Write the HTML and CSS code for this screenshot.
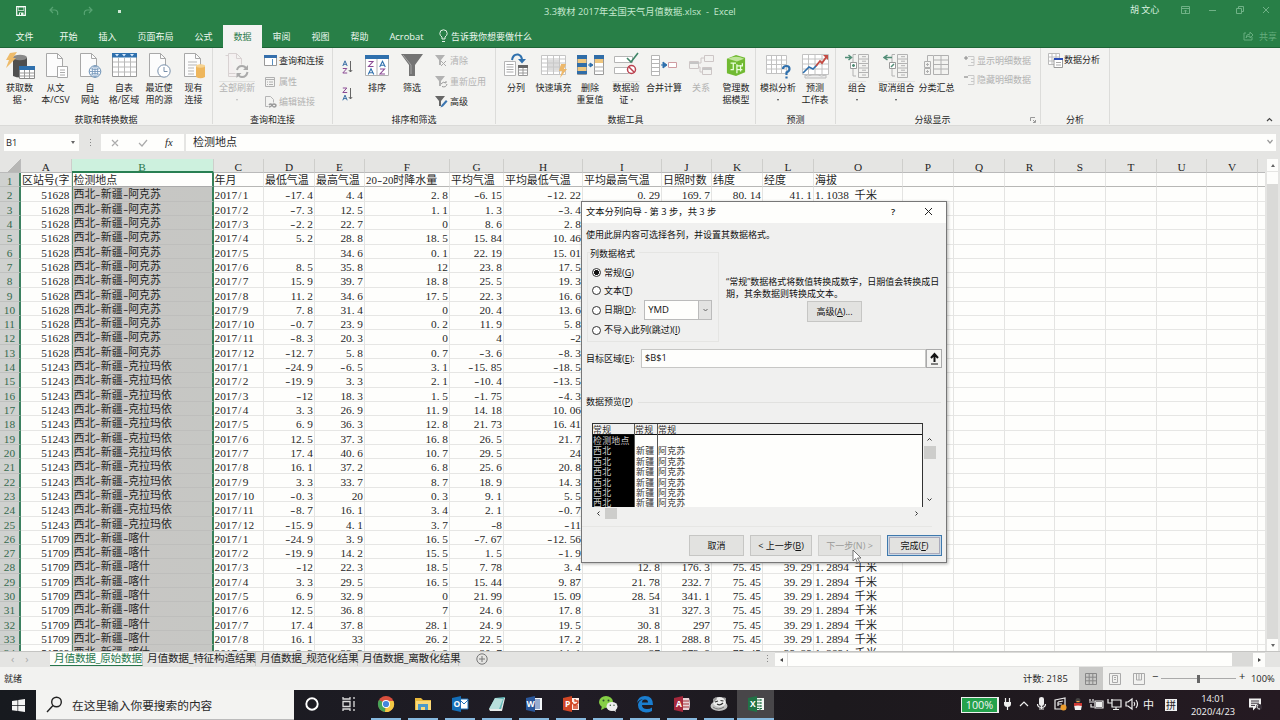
FILE: index.html
```html
<!DOCTYPE html>
<html lang="zh-CN">
<head>
<meta charset="utf-8">
<title>3.3教材 2017年全国天气月值数据.xlsx - Excel</title>
<link rel="stylesheet" href="styles.css">
</head>
<body>
<svg width="0" height="0" class="defs">
  <defs>
    <symbol id="page" viewBox="0 0 24 27"><path d="M2.500 1.500h11l5 5v18h-16z" fill="#fcfcfc" stroke="#a8a8a8"/><path d="M13.500 1.500v5h5" fill="none" stroke="#a8a8a8"/></symbol>
    <symbol id="funnel" viewBox="0 0 24 27"><path d="M1 2h22l-8 11v11h-6v-11z" fill="#747474"/><path d="M3 3l8 10v9" fill="none" stroke="#a5a5a5"/></symbol>
    <symbol id="outline" viewBox="0 0 27 27"><path d="M14.500 2.500h10v23h-10zM14.500 7h10M14.500 11.500h10M14.500 16h10M14.500 20.500h10M18 4.700h4M18 9.200h4M18 13.700h4M18 18.200h4M18 23h4M12 2.500h-3v8M12 24h-3v-8" fill="none" stroke="#b2b2b2"/><path d="M6.500 10.500h6v6h-6z" fill="#fff" stroke="#999"/></symbol>
  </defs>
</svg>
<div class="app">
  <header class="titlebar">
    <div class="quick">
      <svg width="10" height="10" viewBox="0 0 10 10"><path d="M.7.700h8.600v8.600H.7z" fill="none" stroke="#fff" stroke-width="1.200"/><path d="M2 .7h6v4H2zM3 6.500h4.500v3H3z" fill="#e9f6ec"/><path d="M2.500 1.500h5v2.500h-5zM4 7h1v2H4z" fill="#287f47"/></svg>
      <svg width="11" height="11" viewBox="0 0 11 11"><path d="M4 1L1 4l3 3M1 4h5q3.500.5 2.500 5" fill="none" stroke="#57a473" stroke-width="1.200"/></svg>
      <svg width="11" height="11" viewBox="0 0 11 11"><path d="M7 1l3 3-3 3M10 4H5Q1.500 4.500 2.500 9" fill="none" stroke="#57a473" stroke-width="1.200"/></svg>
      <i class="qdot"></i>
    </div>
    <div class="doc">3.3教材 2017年全国天气月值数据.xlsx&nbsp; -&nbsp; Excel</div>
    <div class="user">胡 文心</div>
    <svg class="winbtns" width="92" height="12" viewBox="0 0 92 12"><g fill="none" stroke="#70b287"><path d="M.5 2.500h8v7h-8zM.5 4.500h8M4.500 9V6M3 7.500L4.500 6 6 7.500M28 6.500h7M55.500 4.500h5v5h-5zM57.500 4.500v-2h5v5h-2"/><path d="M82 3l6 6M88 3l-6 6"/></g></svg>
  </header>
  <nav class="tabs">
    <span style="width:49px">文件</span><span style="width:39px">开始</span><span style="width:39px">插入</span><span style="width:57px">页面布局</span><span style="width:39px">公式</span><span class="on" style="width:39px">数据</span><span style="width:39px">审阅</span><span style="width:39px">视图</span><span style="width:39px">帮助</span><span class="acro" style="width:55px">Acrobat</span>
    <svg class="bulb" width="9" height="14" viewBox="0 0 9 14"><path d="M3 10V8Q.8 6.500.800 4.500a3.700 3.700 0 017.400 0Q8.200 6.500 6 8v2zM3 12.500h3" fill="none" stroke="#e2f2e6"/></svg>
    <span class="tell">告诉我你想要做什么</span>
    <svg class="share" width="11" height="10" viewBox="0 0 11 10"><path d="M3 2H1v7h8V6M3 7q0-4 4-4V1l3 3-3 3V5q-3 0-4 2" fill="none" stroke="#65ad7e"/></svg><span class="sharetxt">共享</span>
  </nav>

  <section class="ribbon">
    <div class="group" style="width:213px">
      <div class="tools">
        <div class="btn" style="width:39px"><svg width="30" height="27" viewBox="0 0 30 27"><path d="M8 6q6-4 14 0v18q-7 3-14 0z" fill="#4f4f4f"/><ellipse cx="15" cy="5.500" rx="7" ry="2.800" fill="#8a8a8a"/><path d="M5 1l7-1-4 6 3 0L1 16l3-8H1z" fill="#eebb6a"/><path d="M14.500 15.500h15v11h-15z" fill="#fff" stroke="#888"/><path d="M14 14h16v4H14z" fill="#2f70ad"/><path d="M15 21h14M15 24h14M19.500 18v8M24.500 18v8" stroke="#999"/></svg><p>获取数<br>据 <b class="dd"></b></p></div>
        <div class="btn" style="width:33px"><svg width="24" height="27" viewBox="0 0 24 27"><use href="#page"/><path d="M13.500 14.500h10v11h-10z" fill="#fff" stroke="#a8a8a8"/><path d="M16 18h5M16 20.500h5M16 23h5" stroke="#aaa"/></svg><p>从文<br>本/CSV</p></div>
        <div class="btn" style="width:36px"><svg width="24" height="27" viewBox="0 0 24 27"><use href="#page"/><circle cx="17" cy="19.500" r="5.800" fill="#f8fbff" stroke="#6c91b5"/><path d="M11.500 19.500h11M17 14v11M12.500 16.700q4.500 2 9 0M12.500 22.300q4.500-2 9 0" fill="none" stroke="#6c91b5" stroke-width=".8"/><ellipse cx="17" cy="19.500" rx="2.700" ry="5.700" fill="none" stroke="#6c91b5" stroke-width=".8"/></svg><p>自<br>网站</p></div>
        <div class="btn" style="width:32px"><svg width="25" height="27" viewBox="0 0 25 27"><path d="M.5 1.500h24v23H.5z" fill="#fff" stroke="#999"/><path d="M0 1h25v4.500H0z" fill="#2f70ad"/><path d="M3 2h4L5 4.500zM10 2h4L12 4.500zM18 2h4l-2 2.500z" fill="#d7eaff"/><path d="M1 10h23M1 15h23M1 20h23M6.500 6v18M12.500 6v18M18.500 6v18" stroke="#b9b9b9"/></svg><p>自表<br>格/区域</p></div>
        <div class="btn" style="width:38px"><svg width="24" height="27" viewBox="0 0 24 27"><use href="#page"/><circle cx="17" cy="19" r="6.200" fill="#fff" stroke="#7890ab"/><path d="M17 15v4.500h3.500" fill="none" stroke="#7890ab"/></svg><p>最近使<br>用的源</p></div>
        <div class="btn" style="width:31px"><svg width="24" height="27" viewBox="0 0 24 27"><use href="#page"/><path d="M6 10h9M6 13h9M6 16h6M6 19h6M6 22h6" stroke="#b5b5b5"/><path d="M14 14q4.500-3 9 0v11q-4.500 2.500-9 0z" fill="#eeb65c"/><ellipse cx="18.500" cy="14" rx="4.500" ry="1.700" fill="#f6d391"/></svg><p>现有<br>连接</p></div>
      </div>
      <div class="gname">获取和转换数据</div>
    </div>
    <div class="group" style="width:120px">
      <div class="tools">
        <div class="btn dim split" style="width:48px"><svg width="26" height="27" viewBox="0 0 26 27"><path d="M1.500 3.500h3v21h9M4.500 1.500h8l5 5v6M4.500 1.500v20h7M12.500 1.500v5h5" fill="#f4f0f0" stroke="#d8d2d2"/><path d="M13 18q1-4 5-4 3 0 4 2.500M23.500 20q-1 5-5.500 5-3 0-4-3" fill="none" stroke="#aaa" stroke-width="2"/><path d="M24 13v5h-5zM12.500 26v-5h5z" fill="#aaa"/></svg><p>全部刷新<br><b class="dd"></b></p></div>
        <div class="list" style="width:72px">
          <div class="row"><svg width="13" height="12" viewBox="0 0 13 12"><path d="M.5 1.500h12v9H.5z" fill="#fff" stroke="#999"/><path d="M0 0h13v3H0z" fill="#356fac"/><path d="M8.500 4v6" stroke="#5a8fc0"/></svg>查询和连接</div>
          <div class="row dim"><svg width="13" height="12" viewBox="0 0 13 12"><path d="M1.500 1.500h9v9h-9zM1.500 3.500h9M3 6h1M5 6h4M3 8.500h1M5 8.500h4" fill="none" stroke="#b0b0b0"/></svg>属性</div>
          <div class="row dim"><svg width="13" height="12" viewBox="0 0 13 12"><path d="M1.500.500h5l3 3v3M1.500.500v10h3" fill="none" stroke="#b5b5b5"/><path d="M5 9q1.500-2 3 0M8 9q2-2 4 0 0 2-2 2-1 0-2-2-1 2-3 2" fill="none" stroke="#999" stroke-width="1.400"/></svg>编辑链接</div>
        </div>
      </div>
      <div class="gname">查询和连接</div>
    </div>
    <div class="group" style="width:163px">
      <div class="tools">
        <div class="sorts">
          <svg width="12" height="14" viewBox="0 0 12 14"><path d="M.8 6L3 .8 5.200 6M1.600 4.300h2.800" fill="none" stroke="#3a6ea5"/><path d="M.8 8.500h4L.8 13h4.400" fill="none" stroke="#8a4a94"/><path d="M8.500 1v11M6.800 10l1.700 2 1.700-2" fill="none" stroke="#666"/></svg>
          <svg width="12" height="14" viewBox="0 0 12 14"><path d="M.8 1h4L.8 5.500h4.400" fill="none" stroke="#8a4a94"/><path d="M.8 13.300L3 8.100l2.200 5.200M1.600 11.600h2.800" fill="none" stroke="#3a6ea5"/><path d="M8.500 1v11M6.800 10l1.700 2 1.700-2" fill="none" stroke="#666"/></svg>
        </div>
        <div class="btn" style="width:34px"><svg width="24" height="27" viewBox="0 0 24 27"><path d="M.5 3.500h23v20H.5zM12 3.500v20" fill="#fff" stroke="#b0b0b0"/><path d="M0 3h24v4H0z" fill="#2f70ad"/><path d="M3.500 9.500h4.500l-4.500 5h5M15 17h4.500l-4.500 5h5" fill="none" stroke="#8a4a94" stroke-width="1.100"/><path d="M3.200 22.500L6 16.800l2.800 5.700M4.300 20.700h3.400M14.700 15l2.800-5.700L20.300 15M15.800 13.200h3.400" fill="none" stroke="#2f70ad" stroke-width="1.100"/></svg><p>排序</p></div>
        <div class="btn" style="width:36px"><svg width="24" height="27"><use href="#funnel"/></svg><p>筛选</p></div>
        <div class="list" style="width:65px;padding-left:5px">
          <div class="row dim"><svg width="13" height="12" viewBox="0 0 13 12"><path d="M0 0h10L6 5v5H4V5z" fill="#b2b2b2"/><path d="M6 6l5 5M11 6l-5 5" stroke="#aaa"/></svg>清除</div>
          <div class="row dim"><svg width="13" height="12" viewBox="0 0 13 12"><path d="M0 0h10L6 5v5H4V5z" fill="#b2b2b2"/><path d="M6 8q2-3 5-1v-2M12 8q-1 4-5 2.500" fill="none" stroke="#999"/></svg>重新应用</div>
          <div class="row"><svg width="13" height="12" viewBox="0 0 13 12"><path d="M0 0h10L6 5v5H4V5z" fill="#666"/><path d="M5.500 11.500l1-2.500 4.500-5 1.500 1.500-4.500 5z" fill="#3b75b0"/></svg>高级</div>
        </div>
      </div>
      <div class="gname">排序和筛选</div>
    </div>
    <div class="group" style="width:260px">
      <div class="tools">
        <div class="btn" style="width:40px"><svg width="24" height="27" viewBox="0 0 24 27"><path d="M.5 9.500h11v14H.5z" fill="#fff" stroke="#b5b5b5"/><path d="M2.500 12.500h7M2.500 15h7M2.500 17.500h7M2.500 20h7" stroke="#aaa"/><path d="M14.500 14.500h9v9h-9zM14.500 18h9M14.500 21h9M19 15v8" fill="#fff" stroke="#999"/><path d="M14 13h10v3H14z" fill="#666"/><path d="M8 8Q9 2 14 2.500q4 1 4 6" fill="none" stroke="#2f70ad" stroke-width="2"/><path d="M14 7h8l-4 4.500z" fill="#2f70ad"/></svg><p>分列</p></div>
        <div class="btn" style="width:35px"><svg width="26" height="27" viewBox="0 0 26 27"><path d="M.5 3.500h24v19H.5zM.5 7h24M.5 11h24M.5 15h24M.5 19h24M6.500 3v20M12.500 3v20M18.500 3v20" fill="#fff" stroke="#c5c5c5"/><path d="M7 8h11v10H7z" fill="#c9c9c9" opacity=".65"/><path d="M20 12h5l-2 5h3l-7 9 2-7h-3z" fill="#edb86b"/></svg><p>快速填充</p></div>
        <div class="btn" style="width:38px"><svg width="27" height="27" viewBox="0 0 27 27"><path d="M.5 3.500h9v19h-9zM17.500 3.500h9v19h-9z" fill="#fff" stroke="#999"/><path d="M0 3h10v4H0zM0 11h10v4H0zM0 19h10v3H0zM17 3h10v4H17z" fill="#306da8"/><path d="M1 7h8v4H1zM1 15h8v4H1zM18 7h8v4h-8z" fill="#f0c77e"/><path d="M17 15h10M17 19h10" stroke="#aaa"/><path d="M11 13h4M13 11l3 2-3 2z" stroke="#2f70ad" fill="#2f70ad"/></svg><p>删除<br>重复值</p></div>
        <div class="btn split" style="width:34px"><svg width="25" height="27" viewBox="0 0 25 27"><path d="M.5 4.500h18v6H.5zM.5 15.500h14v6H.5z" fill="#fff" stroke="#b5b5b5"/><path d="M13 6l4 4L24 1" fill="none" stroke="#3f8567" stroke-width="1.600"/><circle cx="17.500" cy="17.500" r="4" fill="#fff" stroke="#bb4250" stroke-width="1.500"/><path d="M14.500 14.500l6 6" stroke="#bb4250" stroke-width="1.500"/></svg><p>数据验<br>证 <b class="dd"></b></p></div>
        <div class="btn" style="width:42px"><svg width="26" height="27" viewBox="0 0 26 27"><path d="M.5 3.500h8v20h-8zM.5 7.500h8M.5 11.500h8M.5 15.500h8M.5 19.500h8" fill="#fff" stroke="#b5b5b5"/><path d="M17.500 10.500h8v5h-8z" fill="#fff" stroke="#cf9ca2"/><path d="M10 13h5M12 10l4 3-4 3z" stroke="#2f70ad" fill="#2f70ad"/></svg><p>合并计算</p></div>
        <div class="btn dim" style="width:32px"><svg width="25" height="27" viewBox="0 0 25 27"><path d="M.5 9.500h9v7h-9zM15.500 3.500h9v6h-9zM13.500 15.500h9v7h-9zM9 11h3V6h3M9 15h2v5h2" fill="none" stroke="#cdc6c6"/><path d="M1 10h9v2H1zM14 16h9v2h-9z" fill="#c5c5c5"/></svg><p>关系</p></div>
        <div class="btn" style="width:38px"><svg width="20" height="27" viewBox="0 0 22 27"><path d="M1 6l10-4 10 3v16l-10 4-10-3z" fill="#71ba32"/><path d="M2 6q9-4 18 0l-8 3z" fill="#bfe59a"/><path d="M5 11h6M8 11v7H5M12 12v10M12 14h6v-3M12 18h6M16 13v7" fill="none" stroke="#eaffdc" stroke-width="1.400"/></svg><p>管理数<br>据模型</p></div>
      </div>
      <div class="gname">数据工具</div>
    </div>
    <div class="group" style="width:80px">
      <div class="tools">
        <div class="btn" style="width:44px"><svg width="25" height="27" viewBox="0 0 25 27"><path d="M.5 3.500h20v18H.5zM.5 8h20M.5 12.500h20M.5 17h20M5.500 3v19M10.500 3v19M15.500 3v19" fill="#fff" stroke="#c2c2c2"/><path d="M17 17q0-3 3.500-3 3 0 3 3 0 2-3 3.500v2.500M20.500 24.500v2" fill="none" stroke="#2f70ad" stroke-width="2.200"/></svg><p>模拟分析<br><b class="dd"></b></p></div>
        <div class="btn" style="width:30px"><svg width="27" height="27" viewBox="0 0 27 27"><path d="M.5 2.500h26v20H.5zM.5 7h26M.5 12h26M.5 17h26M6.500 2v20M13 2v20M20 2v20" fill="#fff" stroke="#c2c2c2"/><path d="M1 21l6-6 4 2 4-4" fill="none" stroke="#2f70ad" stroke-width="1.600"/><path d="M14 14l4-5 2 2 5-7" fill="none" stroke="#c44b43" stroke-width="1.800"/><path d="M21 3h5v5z" fill="#c44b43"/><path d="M3 23q2 2 7 0h6q3 2 8 0v3H3z" fill="#eee" stroke="#bbb"/></svg><p>预测<br>工作表</p></div>
      </div>
      <div class="gname">预测</div>
    </div>
    <div class="group" style="width:205px">
      <div class="tools">
        <div class="btn split" style="width:42px"><svg width="27" height="27" viewBox="0 0 27 27"><use href="#outline"/><path d="M1 5.500h6M4.500 3l3 2.500-3 2.500M8 13.500h3M9.500 12v3" fill="none" stroke="#528d77" stroke-width="1.500"/></svg><p>组合<br><b class="dd"></b></p></div>
        <div class="btn split" style="width:37px"><svg width="27" height="27" viewBox="0 0 27 27"><use href="#outline"/><path d="M2 5.500h7M4.500 3L1 5.500 4.500 8M8 15l3-3" fill="none" stroke="#528d77" stroke-width="1.500"/></svg><p>取消组合<br><b class="dd"></b></p></div>
        <div class="btn" style="width:43px"><svg width="26" height="27" viewBox="0 0 26 27"><path d="M9.500 3.500h15v19h-15zM9.500 8h15M9.500 12.500h15M9.500 17h15M17 3v20M9 3.500H3.500v6M.5 9.500h6v6h-6zM.5 16.500h6v6h-6zM2 12.500h3M3.500 11v3M2 19.500h3M3.500 18v3" fill="none" stroke="#b0b0b0"/></svg><p>分类汇总</p></div>
        <div class="list details" style="width:76px">
          <div class="row dim"><svg width="13" height="12" viewBox="0 0 13 12"><path d="M1 3h4M3 1v4" stroke="#888"/><path d="M5 1.500h6v9H5M8 4.500h3M8 7.500h3" fill="none" stroke="#c9c9c9"/></svg>显示明细数据</div>
          <div class="row dim"><svg width="13" height="12" viewBox="0 0 13 12"><path d="M1 3h4" stroke="#777"/><path d="M5 1.500h6v9H5M8 4.500h3M8 7.500h3" fill="none" stroke="#c9c9c9"/></svg>隐藏明细数据</div>
        </div>
      </div>
      <div class="gname launch">分级显示<svg width="6" height="6" viewBox="0 0 6 6"><path d="M.5 4V.500H5M3 3l2 2M5.500 3v2.500H3" fill="none" stroke="#999"/></svg></div>
    </div>
    <div class="group" style="width:69px">
      <div class="tools"><div class="analysis"><svg width="15" height="15" viewBox="0 0 15 15"><path d="M.5.500h11v11H.5zM.5 4h11M.5 8h11M4 .5v11M8 .5v11" fill="#fff" stroke="#bbb"/><path d="M6 5.500h8.500v9H6z" fill="#fff" stroke="#999"/><path d="M6 5h9v2H6z" fill="#294bb6"/><path d="M8 9.500h5M8 12h5" stroke="#aaa"/></svg>数据分析</div></div>
      <div class="gname">分析</div>
    </div>
    <svg class="collapse" width="7" height="5" viewBox="0 0 7 5"><path d="M1 4l2.500-2.500L6 4" fill="none" stroke="#444" stroke-width="1.200"/></svg>
  </section>

  <section class="formula">
    <div class="namebox">B1<b class="tri"></b></div>
    <div class="grip"><i></i><i></i><i></i></div>
    <div class="fx"><svg width="50" height="12" viewBox="0 0 50 12"><path d="M5 3l6 6M11 3l-6 6M32 6l3 3 5-6" fill="none" stroke="#aaa" stroke-width="1.200"/></svg><em>fx</em></div>
    <div class="fvalue">检测地点<svg width="8" height="6" viewBox="0 0 8 6"><path d="M1.500 1L4 4l2.500-3" fill="none" stroke="#999" stroke-width="1.200"/></svg></div>
  </section>

  <main class="sheetwrap">
    <div class="sheet" id="sheet"></div>
    <div class="vscroll"><i class="arrow up"></i><i class="thumb"></i><i class="space"></i><i class="arrow down"></i></div>
  </main>

  <footer class="sheettabs">
    <div class="nav"><i>‹</i><i>›</i></div>
    <span class="tab cur" style="width:93px">月值数据_原始数据</span><span class="tab" style="width:113px">月值数据_特征构造结果</span><span class="tab" style="width:102px">月值数据_规范化结果</span><span class="tab" style="width:101px">月值数据_离散化结果</span>
    <svg class="plus" width="12" height="12" viewBox="0 0 12 12"><circle cx="6" cy="6" r="5.200" fill="none" stroke="#777"/><path d="M6 3v6M3 6h6" stroke="#777"/></svg>
    <div class="grip tabgrip"><i></i><i></i><i></i></div>
    <div class="hscroll"><i class="ha l"></i><i class="hthumb"></i><i class="hspace"></i><i class="ha r"></i></div>
  </footer>

  <footer class="status">
    <span class="ready">就绪</span><span class="count">计数: 2185</span>
    <div class="view act"><svg width="12" height="12" viewBox="0 0 12 12"><path d="M.5.500h11v11H.5zM.5 4.200h11M.5 7.800h11M4.200.500v11M7.800.500v11" fill="none" stroke="#888"/></svg></div>
    <div class="view"><svg width="12" height="12" viewBox="0 0 12 12"><path d="M.5.500h11v11H.5zM3.500 2.500h5v7h-5zM5 4.500h2M5 6.500h2" fill="none" stroke="#aaa"/></svg></div>
    <div class="view"><svg width="12" height="12" viewBox="0 0 12 12"><path d="M.5.500h11v11H.5zM3.500 1v6h5V1M6 1v6" fill="none" stroke="#aaa"/></svg></div>
    <div class="zoom"><b>−</b><i class="bar"><u></u></i><b>+</b></div><span class="pct">100%</span>
  </footer>

  <footer class="taskbar">
    <div class="start"><svg width="13" height="13" viewBox="0 0 13 13"><path d="M0 2l5.500-.8v5H0zM6.200 1L13 0v6.200H6.200zM0 7h5.500v5L0 11.200zM6.200 7H13v6l-6.800-1z" fill="#f4f4f4"/></svg></div>
    <div class="search"><svg width="17" height="17" viewBox="0 0 17 17"><circle cx="10.500" cy="6" r="4.800" fill="none" stroke="#222" stroke-width="1.400"/><path d="M7 9.500L1 16" stroke="#222" stroke-width="1.400"/></svg>在这里输入你要搜索的内容</div>
    <div class="apps">
      <div class="app-i off"><svg width="18" height="18" viewBox="0 0 18 18"><circle cx="9" cy="9" r="5.700" fill="none" stroke="#fff" stroke-width="1.900"/></svg></div>
      <div class="app-i off"><svg width="18" height="18" viewBox="0 0 18 18"><path d="M3 2v2h7V2M3 16v-2h7v2M3 6.500h7v5H3zM14 2v2M14 6v6M14 14v2" fill="none" stroke="#ddd" stroke-width="1.300"/></svg></div>
      <div class="app-i"><svg width="18" height="18" viewBox="0 0 18 18"><circle cx="9" cy="9" r="8" fill="#d94f3d"/><path d="M9 9L2 5a8 8 0 006 12z" fill="#44a457"/><path d="M9 9l-1 8A8 8 0 0016.500 6H9z" fill="#f4c945"/><path d="M9 9l-4 2-3-6" fill="#44a457"/><circle cx="9" cy="9" r="4" fill="#fff"/><circle cx="9" cy="9" r="3.100" fill="#4286dd"/></svg></div>
      <div class="app-i"><svg width="18" height="18" viewBox="0 0 18 18"><path d="M1 3h6l2 2h8v10H1z" fill="#e9b93c"/><path d="M2 6h15v9H2z" fill="#fad979"/><path d="M4 15V9h10v6h-3v-3H7v3z" fill="#4b9aca"/></svg></div>
      <div class="app-i"><svg class="office" width="18" height="18" viewBox="0 0 18 18"><path d="M9 4h8v10H9z" fill="#fff"/><path d="M9 5l4 4 4-4M9 4h8v10H9" fill="none" stroke="#2374bd"/><path d="M1 3l9-2v16l-9-2z" fill="#146eb8"/><text x="2.500" y="12">O</text></svg></div>
      <div class="app-i"><svg width="18" height="18" viewBox="0 0 18 18"><path d="M7 3l10-1-4 13-12-1z" fill="#62b9b8"/><path d="M7 3l8 1-4 10-10 0z" fill="#b8dfdc"/><path d="M1 14l12 0 3-11 1 0-3 13-12 0z" fill="#e7ebea"/></svg></div>
      <div class="app-i"><svg class="office" width="18" height="18" viewBox="0 0 18 18"><path d="M9 3h8v12H9z" fill="#f4f7fa"/><path d="M10 5h5M10 7h5M10 9h5M10 11h5M10 13h5" stroke="#3b62a7"/><path d="M1 3l9-2v16l-9-2z" fill="#2b579a"/><text x="1.500" y="12">W</text></svg></div>
      <div class="app-i"><svg class="office" width="18" height="18" viewBox="0 0 18 18"><path d="M9 3h8v12H9z" fill="#fff0ea"/><path d="M10 7a3 3 0 106-1h-3V4M11 11h5M11 13h5" stroke="#d24726" fill="none" stroke-width="1.300"/><path d="M1 3l9-2v16l-9-2z" fill="#d24726"/><text x="3" y="12">P</text></svg></div>
      <div class="app-i"><svg width="20" height="18" viewBox="0 0 20 18"><ellipse cx="8" cy="7" rx="7" ry="6" fill="#86cf46"/><path d="M4 11l-1 4 4-2z" fill="#86cf46"/><ellipse cx="14" cy="11.500" rx="5.500" ry="4.500" fill="#eee"/><path d="M15 15l3 2-1-4z" fill="#eee"/><g fill="#2a512e"><circle cx="5.500" cy="5.500" r="1"/><circle cx="10.500" cy="5.500" r="1"/><circle cx="12.300" cy="10.300" r=".7"/><circle cx="16" cy="10.300" r=".7"/></g></svg></div>
      <div class="app-i"><svg width="18" height="18" viewBox="0 0 18 18"><path d="M1 8Q2 1 9 1q8 0 8 9H6q0 4 5 4 3 0 5-1.500V16q-3 1.500-6 1.500Q2 17 2 10q0-4 5-6Q3 4.500 1 8zM6 7.500h6Q12 4.500 9 4.500T6 7.500z" fill="#1a7ed0" fill-rule="evenodd"/></svg></div>
      <div class="app-i"><svg class="office" width="18" height="18" viewBox="0 0 18 18"><path d="M9 3h7q2 6 0 12H9z" fill="#e9d2d6"/><path d="M10 6h6M10 9h6M10 12h6" stroke="#a4373a"/><path d="M1 3l9-2v16l-9-2z" fill="#a5283c"/><text x="3" y="12">A</text></svg></div>
      <div class="app-i"><svg width="18" height="18" viewBox="0 0 18 18"><ellipse cx="9" cy="11" rx="8.500" ry="5" fill="#c2c2c2"/><ellipse cx="9.500" cy="7" rx="6.500" ry="5" fill="#ededed"/><path d="M3 4l3-2 1 2-4 4zM13 2l3 1v4z" fill="#9a9a9a"/><path d="M5 7l3-1M10.500 5.500l3 .5M7 9q3 2 6-1" stroke="#333" stroke-width="1.200" fill="none"/><path d="M3 12q5 4 11 0" stroke="#777" fill="none"/></svg></div>
      <div class="app-i cur"><svg class="office" width="18" height="18" viewBox="0 0 18 18"><path d="M9 3h8v12H9z" fill="#f2f7f3"/><path d="M10 5h6M10 8h6M10 11h6M10 13.500h6M13 4v11" stroke="#217346" stroke-dasharray="2 1"/><path d="M1 3l9-2v16l-9-2z" fill="#217346"/><text x="3" y="12">X</text></svg></div>
    </div>
    <div class="battery">100%</div>
    <svg class="tray" width="142" height="16" viewBox="0 0 142 16"><g fill="none" stroke="#eee" stroke-width="1.200"><path d="M5.500 10v4M3.500 2v4M7.500 2v4M18 10l4-4 4 4M39.500 9v4M37 13h5M35.500 8q0 3.500 4 3.500t4-3.500"/><path d="M53 4l10-2v11H53zM56 6l5-1M56 10v-4M56 8h4"/><path d="M93 5h8v7h-8zM88 3v2M91 3v2M87 6h5M89 8v3h3M109 4h10v7h-9v-4M114 11v2M111 13.500h6M106 3v4h4v-4M124 6h2l4-3v10l-4-3h-2zM132 6q1.500 2 0 4M134 4q3 4 0 8"/></g><path d="M2 6h7v2q0 3-3.500 3T2 8zM37 3q0-2 2.500-2T42 3v5q0 2-2.500 2T37 8zM94 6h6v5h-6z" fill="#eee"/><circle cx="61.500" cy="11.500" r="3" fill="#ed9e2f"/><path d="M72 9h8l-1 5h-6z" fill="#f2f2f2"/><circle cx="76" cy="4.500" r="2.500" fill="#444"/><path d="M72 7h8v3q-4-1-8 0z" fill="#cf3832"/><path d="M74.500 5h3v1h-3z" fill="#f2ae43"/></svg>
    <span class="ime">中</span><span class="pin">拼</span>
    <div class="clock">14:01<br>2020/4/23</div>
    <svg class="note" width="15" height="15" viewBox="0 0 15 15"><path d="M1 1.500h12v9H8l-3 3v-3H1z" fill="#f1f1f1"/><path d="M3 4h8M3 6.200h8M3 8.400h4" stroke="#39313a"/><circle cx="11" cy="10" r="3" fill="#39313a"/><path d="M10 8a2.300 2.300 0 002 4" stroke="#eee" fill="none"/></svg>
  </footer>

  <div class="dialog">
    <div class="dtitle"><span>文本分列向导 - 第 3 步，共 3 步</span><b>?</b><svg width="9" height="9" viewBox="0 0 9 9"><path d="M1 1l7 7M8 1l-7 7" stroke="#222"/></svg></div>
    <div class="dintro">使用此屏内容可选择各列，并设置其数据格式。</div>
    <div class="dformat">
      <div class="fmtbox">
        <div class="legend">列数据格式</div>
        <div class="radio"><i class="on"></i>常规(<u>G</u>)</div>
        <div class="radio"><i></i>文本(<u>T</u>)</div>
        <div class="radio date"><i></i>日期(<u>D</u>):<div class="combo">YMD<span><svg width="7" height="5" viewBox="0 0 7 5"><path d="M1.500 1l2 2 2-2" fill="none" stroke="#666"/></svg></span></div></div>
        <div class="radio"><i></i>不导入此列(跳过)(<u>I</u>)</div>
      </div>
      <div class="fmtinfo"><p>“常规”数据格式将数值转换成数字，日期值会转换成日<br>期，其余数据则转换成文本。</p><button class="adv">高级(<u>A</u>)...</button></div>
    </div>
    <div class="dtarget"><span>目标区域(<u>E</u>):</span><div class="tinput">$B$1</div><div class="pick"><svg width="11" height="13" viewBox="0 0 11 13"><path d="M5.500 10V3M2 6l3.500-4L9 6" fill="none" stroke="#111" stroke-width="2"/><path d="M2 12h7" stroke="#111"/></svg></div></div>
    <div class="dprev"><span>数据预览(<u>P</u>)</span><i></i></div>
    <div class="pvwrap">
      <div class="pv" id="pv"></div>
      <div class="pvs"><svg width="7" height="5" viewBox="0 0 7 5"><path d="M1.500 3.500l2-2 2 2" fill="none" stroke="#333"/></svg><i></i><svg class="dn" width="7" height="5" viewBox="0 0 7 5"><path d="M1.500 1.500l2 2 2-2" fill="none" stroke="#333"/></svg></div>
    </div>
    <div class="pvh"><svg width="5" height="7" viewBox="0 0 5 7"><path d="M3.500 1.500l-2 2 2 2" fill="none" stroke="#333"/></svg><i></i><svg class="rt" width="5" height="7" viewBox="0 0 5 7"><path d="M1.500 1.500l2 2-2 2" fill="none" stroke="#333"/></svg></div>
    <div class="dbtns"><button style="width:55px">取消</button><button style="width:62px">&lt; 上一步(<u>B</u>)</button><button class="dis" style="width:63px">下一步(<span>N</span>) &gt;</button><button class="def" style="width:55px">完成(<u>F</u>)</button></div>
  </div>
  <svg class="cursor" width="10" height="15" viewBox="0 0 10 15"><path d="M1 1v11l2.700-2.500L5.500 14l2-1-2-4H9z" fill="#fff" stroke="#555" stroke-width=".8"/></svg>
</div>
<script src="sheet.js"></script>
</body>
</html>
```

FILE: styles.css
```css
* { box-sizing: border-box; }
body { margin: 0; font-family: "Open Sans", "Noto Sans CJK SC", sans-serif; font-size: 9px; line-height: 12px; color: #262626; }
p { margin: 0; }
i, em { font-style: normal; }
svg { flex: none; display: block; }
.defs { position: absolute; }
.app { position: relative; width: 1280px; height: 720px; overflow: hidden; display: flex; flex-direction: column; background: #e5e5e3; white-space: nowrap; }

.titlebar { height: 25px; background: #287f47; color: #c5e8cf; display: flex; position: relative; flex: none; }
.quick { display: flex; gap: 22px; padding: 6px 0 0 16px; width: 540px; }
.quick svg:first-child { margin-right: 1px; }
.qdot { width: 3px; height: 3px; background: #cfe8d5; margin: 4px 0 0 3px; }
.doc { width: 590px; padding: 6px 0 0 4px; font-size: 9.250px; }
.user { width: 53px; padding-top: 4px; color: #dcf3e1; }
.winbtns { margin: 4px 0 0 -2px; }

.tabs { height: 23px; flex: none; background: #287f47; border-bottom: 1px solid #1d6536; display: flex; align-items: center; color: #eff9f1; }
.tabs > span { text-align: center; line-height: 24px; height: 22px; }
.tabs .on { background: #f3f3f2; color: #2c7a4b; height: 23px; }
.tabs .acro { font-size: 9.400px; }
.tabs .bulb { margin-left: 5px; }
.tabs .tell { margin-left: 3px; width: 82px; text-align: left; }
.tabs .share { margin-left: 710px; }
.tabs .sharetxt { color: #66ad7e; margin-left: 5px; }

.ribbon { height: 78px; flex: none; background: #f3f3f1; border-bottom: 1px solid #dadad8; display: flex; }
.group { height: 76px; border-right: 1px solid #dcdcda; display: flex; flex-direction: column; flex: none; }
.tools { height: 65px; flex: none; display: flex; padding-top: 4px; }
.btn { display: flex; flex-direction: column; align-items: center; text-align: center; flex: none; }
.btn p { margin-top: 3px; line-height: 11.5px; height: 23px; }
.split p { border-top: 1px solid #e2e2e0; margin-top: 2px; height: 24px; }
.dd { display: inline-block; border: 1.500px solid transparent; border-top: 2px solid #444; vertical-align: 1px; }
.dim { color: #b2b2b2; }
.dim .dd { border-top-color: #bbb; }
.list { display: flex; flex-direction: column; padding-left: 3px; flex: none; gap: 0; }
.row { height: 20.500px; display: flex; align-items: center; gap: 2px; padding-bottom: 2px; flex: none; }
.details { padding-left: 5px; }
.details .row { height: 19px; gap: 1px; }
.gname { text-align: center; line-height: 14px; }
.launch { display: flex; justify-content: center; align-items: center; position: relative; padding-right: 11px; }
.launch svg { position: absolute; right: 4px; top: 4px; }
.sorts { width: 27px; padding: 8px 0 0 9px; display: flex; flex-direction: column; gap: 13px; }
.analysis { display: flex; align-items: flex-start; gap: 1px; padding: 1px 0 0 7px; height: 16px; line-height: 14px; }
.collapse { margin: 69px 0 0 156px; }

.formula { height: 33px; flex: none; display: flex; padding: 8px 4px 8px 4px; background: #e5e5e3; }
.namebox { width: 75px; background: #fefefc; display: flex; justify-content: space-between; align-items: center; padding: 0 4px 0 2px; height: 17px; font-size: 9.300px; }
.tri { border: 2.500px solid transparent; border-top: 3px solid #666; margin-top: 2px; }
.grip { width: 22px; display: flex; flex-direction: column; gap: 2px; align-items: center; padding-top: 5px; }
.grip i { width: 1px; height: 1px; background: #888; }
.fx { width: 83px; background: #fefefc; margin-right: 2px; display: flex; align-items: center; padding-left: 6px; height: 17px; }
.fx em { font: italic 10.500px "Liberation Serif", serif; margin-left: 8px; }
.fvalue { flex: 1; background: #fefefc; font-size: 11px; line-height: 16px; padding: 0 2px 2px 7px; height: 17px; display: flex; justify-content: space-between; align-items: center; }

.sheetwrap { height: 492px; flex: none; display: flex; }
.sheet { width: 1265px; height: 492px; overflow: hidden; background: #fefefc; font-family: "Liberation Serif", "Noto Sans CJK SC", serif; font-size: 11.300px; font-weight: 400; }
.r { display: grid; grid-template-columns: 21px 50.500px 142px 50.500px 51px 50px 85px 54px 79px 79px 50px 51px 51px 89px 51px 51px 50px 51px 51px 50px 51px 8px; height: 14.320px; }
.r > div { border-right: 1px solid #e4e4e2; border-bottom: 1px solid #e6e6e4; line-height: 16px; overflow: hidden; text-align: right; padding-right: 1px; }
.r .t { text-align: left; padding-left: 1px; }
.r .zh { font-size: 10.950px; line-height: 15px; }
.r .h { text-align: center; padding: 0; background: #cfd1cf; color: #35694d; border-right: 2px solid #3c8160; border-bottom-color: #bfc1bf; }
.r .selc { background: linear-gradient(90deg, #c9c6c4, #c6c7c4); border-right: 2px solid #37805b; border-left: 1px solid #55886e; border-bottom-color: #bebebc; }
.cols { height: 14px; }
.cols > div { background: #e5e5e3; text-align: center; border-right-color: #cececb; border-bottom-color: #bababa; line-height: 16px; padding: 0; }
.cols .corner { background: linear-gradient(135deg, #e5e5e3 62%, #b7b7b5 63%); border-right: 1px solid #bbb; }
.cols .selh { background: #cdf1de; color: #27764c; border-bottom: 2px solid #287f52; }
.first > div { border-bottom-color: #b7b7b5; line-height: 16px; }
.first .selc { background: #fefefc; border-bottom-color: #aaa; }
.c { display: inline-block; width: .5em; text-align: left; }
.c.m { text-align: center; }
.c.d { text-align: center; transform: scaleX(1.350); }
.vscroll { width: 15px; padding-left: 2px; background: #e5e5e3; display: flex; flex-direction: column; }
.arrow { width: 11px; height: 12px; background: #fdfdfb; display: flex; justify-content: center; align-items: center; }
.arrow::before { content: ""; border: 2.500px solid transparent; }
.up::before { border-bottom: 3px solid #666; border-top: 0; }
.down::before { border-top: 3px solid #666; border-bottom: 0; }
.thumb { height: 12px; width: 11px; background: #fdfdfb; margin-top: 1px; }
.space { flex: 1; background: #dadad8; width: 11px; }

.sheettabs { height: 16px; flex: none; border-top: 1px solid #c4c4c2; background: #e4e4e2; display: flex; font-size: 11px; line-height: 14px; }
.nav { width: 50px; display: flex; gap: 11px; padding-left: 11px; color: #aaa; flex: none; }
.tab { border-right: 1px solid #c9c9c7; padding-left: 4px; letter-spacing: -.250px; height: 14px; line-height: 13px; font-size: 10.700px; flex: none; }
.cur.tab { color: #27764c; background: #fdfdfb; border-bottom: 1px solid #27764c; }
.plus { margin: 1px 0 0 17px; }
.tabgrip { margin-left: 268px; padding-top: 3px; }
.hscroll { display: flex; margin-left: -3px; width: 490px; height: 14px; padding-top: 1px; background: #dadad8; flex: none; }
.ha { width: 12px; background: #fdfdfb; display: flex; justify-content: center; align-items: center; }
.ha::before { content: ""; border: 2.500px solid transparent; }
.ha.l::before { border-right: 3px solid #444; border-left: 0; }
.ha.r::before { border-left: 3px solid #444; border-right: 0; }
.hthumb { margin-left: 1px; width: 444px; background: #fefefc; }
.hspace { flex: 1; }

.status { height: 23px; flex: none; background: #f2f2f0; display: flex; align-items: center; }
.ready { width: 1023px; padding-left: 4px; }
.count { width: 56px; font-size: 9.300px; }
.view { width: 24px; height: 23px; display: flex; align-items: center; justify-content: center; }
.view.act { background: #c9c9c7; }
.zoom { display: flex; align-items: center; gap: 3px; margin-left: 1px; }
.zoom b { font-weight: 400; font-size: 11px; margin-top: -6px; width: 6px; text-align: center; }
.bar { width: 75px; height: 1px; background: #aaa; display: flex; align-items: center; justify-content: center; }
.bar u { width: 3px; height: 8px; background: #666; }
.pct { margin-left: 6px; font-size: 9.300px; }

.taskbar { height: 30px; flex: none; background: linear-gradient(90deg, #171a1f, #201c25 45%, #1c191d 65%, #251a22); display: flex; color: #f4f4f4; }
.start { width: 36px; padding: 9px 0 0 12px; flex: none; }
.search { width: 258px; flex: none; background: #f3f3f1; border-bottom: 1px solid #bbb; color: #292929; display: flex; align-items: center; gap: 9px; padding-left: 10px; font-size: 11.700px; }
.apps { display: flex; width: 667px; flex: none; padding-left: 0; }
.app-i { width: 30px; height: 30px; margin: 0 3.500px; display: flex; align-items: center; justify-content: center; border-bottom: 2px solid #87b9df; flex: none; }
.app-i:first-child { margin-left: 2.500px; }
.app-i.off { border-color: transparent; }
.app-i.cur { width: 37px; margin: 0; background: #484649; }
.office text { font: bold 8.500px "Open Sans", sans-serif; fill: #fff; }
.battery { width: 37px; height: 16px; margin-top: 7px; border: 1px solid #f0f0f0; background: #24a24c; font-size: 10.800px; line-height: 13px; text-align: center; box-shadow: 1px 0 #eee; flex: none; }
.tray { margin: 6px 0 0 4px; }
.ime { font-size: 11px; width: 12px; margin: 9px 0 0 -1px; }
.pin { margin: 9px 0 0 10px; width: 12px; height: 12px; line-height: 12px; background: #f0f0f0; color: #242024; text-align: center; font-size: 10px; flex: none; }
.clock { width: 62px; margin: 2px 0 0 5px; text-align: center; line-height: 13px; font-size: 9.300px; flex: none; }
.note { margin: 7px 0 0 4px; }

.dialog { position: absolute; left: 581px; top: 201px; width: 366px; height: 362px; border: 1px solid #777; background: #f0f0ef; box-shadow: 1px 1px 3px rgba(0,0,0,.3); display: flex; flex-direction: column; color: #111; }
.dtitle { height: 21px; background: #fefefc; display: flex; align-items: center; padding: 0 0 2px 4px; flex: none; font-size: 9.300px; }
.dtitle span { width: 305px; }
.dtitle b { font-weight: 600; width: 33px; }
.dintro { height: 24px; line-height: 24px; padding-left: 4px; flex: none; }
.dformat { height: 101px; display: flex; padding: 5px 0 0 5px; flex: none; }
.fmtbox { width: 132px; height: 90px; border: 1px solid #e5e5e3; flex: none; }
.legend { background: #f0f0ef; width: 49px; margin: -5px 0 0 2px; height: 12px; }
.radio { height: 18px; margin: 0 0 0 4px; display: flex; align-items: center; }
.radio:nth-child(2) { margin-top: 3px; height: 19px; }
.radio:nth-child(3) { height: 17px; }
.radio.date { height: 22px; }
.radio > i { width: 9px; height: 9px; border: 1px solid #333; border-radius: 50%; margin-right: 3px; background: #fff; }
.radio .on { background: radial-gradient(circle, #111 0 2.200px, #fff 2.800px); }
.combo { margin-left: 8px; width: 68px; height: 20px; border: 1px solid #bbb; background: #fefefc; padding-left: 3px; display: flex; justify-content: space-between; line-height: 18px; font-size: 9.500px; }
.combo span { width: 13px; background: #e3e3e2; border-left: 1px solid #bbb; display: flex; justify-content: center; align-items: center; }
.fmtinfo { padding: 24px 0 0 7px; font-size: 9px; line-height: 11.500px; }
button { font: inherit; color: inherit; border: 1px solid #c6c6c4; background: #e2e2e0; height: 21px; padding: 0; line-height: 19px; flex: none; }
.adv { display: block; width: 55px; margin: 2px 0 0 81px; }
.dtarget { height: 20px; display: flex; padding-left: 4px; flex: none; align-items: center; }
.dtarget span { width: 55px; padding-top: 2px; }
.tinput { width: 285px; height: 19px; border: 1px solid #c7c7c5; background: #fefefc; padding-left: 3px; line-height: 16px; font-size: 9.200px; }
.pick { width: 16px; height: 19px; border: 1px solid #aaa; display: flex; justify-content: center; align-items: center; background: #f5f5f3; }
.dprev { margin-top: 28px; height: 12px; display: flex; align-items: center; padding: 0 5px 0 4px; flex: none; }
.dprev i { flex: 1; height: 1px; background: #e1e1df; margin-left: 5px; }
.pvwrap { display: flex; margin: 15px 0 0 10px; height: 84px; flex: none; }
.pv { width: 331px; border: 1px solid #333; border-bottom: 0; background: #fefefc; overflow: hidden; height: 84px; letter-spacing: .3px; font-size: 8.900px; color: #333; }
.pr { display: grid; grid-template-columns: 42px 23px 1fr; height: 10.400px; line-height: 12px; }
.pr div { border-right: 1px solid #555; padding-left: 0; }
.pr div:last-child { border-right: 0; }
.pr:first-child { background: #f0f0ef; border-bottom: 1px solid #111; height: 11px; }
.pr:not(:first-child) div:first-child { background: #000; color: #ccc; }
.pr:not(:first-child) div:nth-child(2) { padding-left: 1px; }
.pvs { width: 13px; padding-top: 14px; display: flex; flex-direction: column; align-items: center; }
.pvs i { width: 12px; height: 13px; background: #cdcdcb; margin-top: 4px; }
.pvs .dn { margin-top: 38px; }
.pvh { height: 20px; flex: none; display: flex; align-items: flex-start; padding: 1px 10px 0 14px; margin-right: 14px; border-bottom: 1px solid #e6e6e4; }
.pvh svg { margin-top: 2px; }
.pvh i { width: 12px; height: 11px; background: #cdcdcb; margin-left: 4px; }
.pvh .rt { margin-left: 297px; }
.dbtns { display: flex; gap: 6px; padding: 8px 0 0 107px; }
.dis { color: #9a9a98; border-color: #d0d0ce; }
.def { border: 1px solid #3f79ad; box-shadow: inset 0 0 0 1px #c9d8e6, inset 0 0 0 2px #aab; }
.cursor { position: absolute; left: 852px; top: 549px; }
```

FILE: sheet.js
```js
const heads = ['A', 'B', 'C', 'D', 'E', 'F', 'G', 'H', 'I', 'J', 'K', 'L', 'O', 'P', 'Q', 'R', 'S', 'T', 'U', 'V', ''];
const titles = ['区站号(字', '检测地点', '年月', '最低气温', '最高气温', '20-20时降水量', '平均气温', '平均最低气温', '平均最高气温', '日照时数', '纬度', '经度', '海拔'];
const readings = `-17.4,4.4,2.8,-6.15,-12.22,0.29,169.7,80.14,41.1,1.1038 千米
-7.3,12.5,1.1,1.3,-3.4
-2.2,22.7,0,8.6,2.8
5.2,28.8,18.5,15.84,10.46
,34.6,0.1,22.19,15.01
8.5,35.8,12,23.8,17.5
15.9,39.7,18.8,25.5,19.3
11.2,34.6,17.5,22.3,16.6
7.8,31.4,0,20.4,13.6
-0.7,23.9,0.2,11.9,5.8
-8.3,20.3,0,4,-2
-12.7,5.8,0.7,-3.6,-8.3
-24.9,-6.5,3.1,-15.85,-18.5
-19.9,3.3,2.1,-10.4,-13.5
-12,18.3,1.5,-1.75,-4.3
3.3,26.9,11.9,14.18,10.06
6.9,36.3,12.8,21.73,16.41
12.5,37.3,16.8,26.5,21.7
17.4,40.6,10.7,29.5,24
16.1,37.2,6.8,25.6,20.8
3.3,33.7,8.7,18.9,14.3
-0.3,20,0.3,9.1,5.5
-8.7,16.1,3.4,2.1,-0.7
-15.9,4.1,3.7,-8,-11
-24.9,3.9,16.5,-7.67,-12.56
-19.9,14.2,15.5,1.5,-1.9
-12,22.3,18.5,7.78,3.4,12.8,176.3,75.45,39.29,1.2894 千米
3.3,29.5,16.5,15.44,9.87,21.78,232.7,75.45,39.29,1.2894 千米
6.9,32.9,0,21.99,15.09,28.54,341.1,75.45,39.29,1.2894 千米
12.5,36.8,7,24.6,17.8,31,327.3,75.45,39.29,1.2894 千米
17.4,37.8,28.1,24.9,19.5,30.8,297,75.45,39.29,1.2894 千米
16.1,33,26.2,22.5,17.2,28.1,288.8,75.45,39.29,1.2894 千米
3.3,32.3,1.8,20.7,14.1,27,273.8,75.45,39.29,1.2894 千米`.split('\n').map(l => l.split(','));
const stations = [[51628, '西北-新疆-阿克苏'], [51243, '西北-新疆-克拉玛依'], [51709, '西北-新疆-喀什']];

// Half-width cells: punctuation takes the same advance as a digit.
const kind = { '.': '', '-': ' d', '/': ' m', ' ': ' m' };
const mono = s => String(s).replace(/[.\-\/ ]/g, c => `<span class="c${kind[c]}">${c}</span>`);
const cell = (s, cls = '') => `<div class="${cls}">${mono(s)}</div>`;

let html = '<div class="r cols"><div class="corner"></div>' + heads.map(h => cell(h, h === 'B' ? 'selh' : '')).join('') + '</div>';
html += '<div class="r first">' + cell(1, 'h') + heads.map((h, i) => cell(titles[i] || '', 't zh' + (i === 1 ? ' selc' : ''))).join('') + '</div>';
readings.forEach((row, n) => {
  const st = stations[Math.floor(n / 12)];
  const values = [st[0], st[1], '2017/' + (n % 12 + 1), ...row];
  html += '<div class="r">' + cell(n + 2, 'h') + heads.map((h, i) =>
    cell(values[i] || '', i === 1 ? 't zh selc' : i === 2 || i === 12 ? 't' : '')).join('') + '</div>';
});
document.getElementById('sheet').innerHTML = html;

const lines = [['常规', '常规', '常规'], ['检测地点', '', '']];
for (let i = 0; i < 6; i++) lines.push(['西北', '新疆', '阿克苏']);
document.getElementById('pv').innerHTML = lines.map(l => '<div class="pr">' + l.map(t => `<div>${t}</div>`).join('') + '</div>').join('');
```
